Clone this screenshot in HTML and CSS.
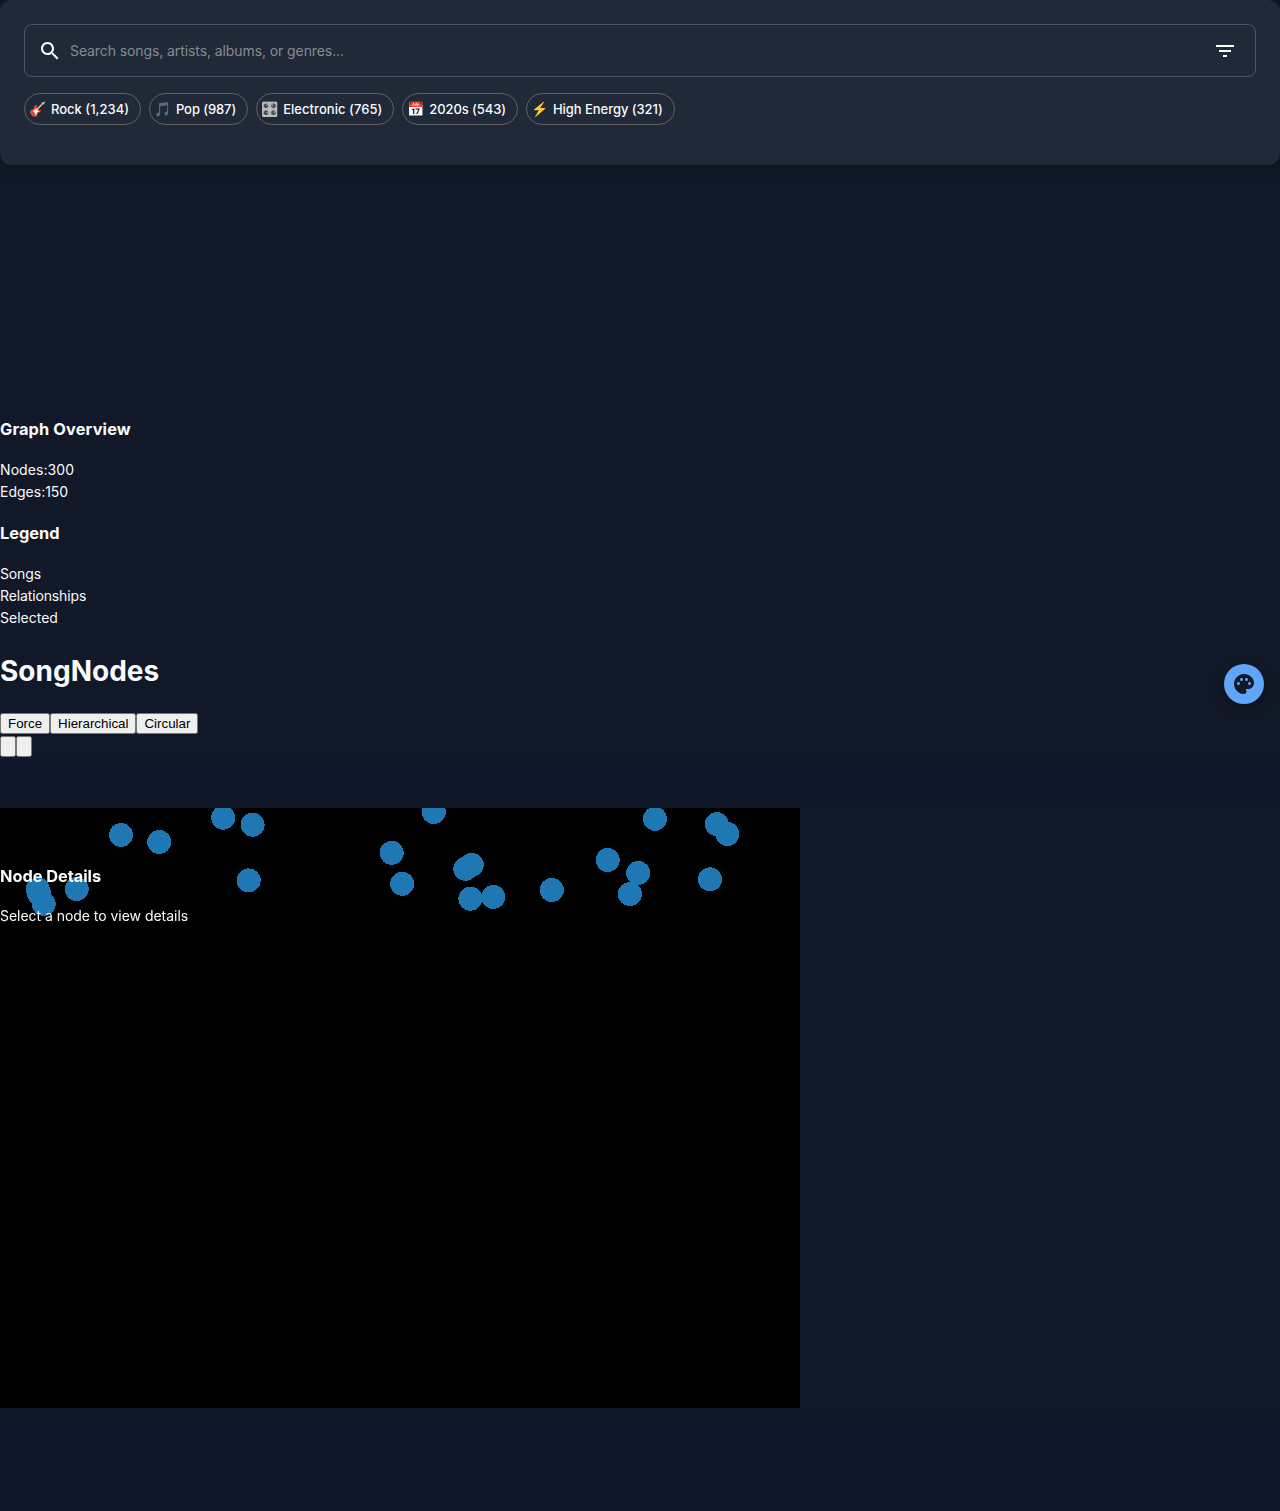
FILE: index.html
```html
<!DOCTYPE html>
<html lang="en">
<head>
<meta charset="utf-8">
<title>SongNodes</title>
<link rel="stylesheet" href="styles.css">
</head>
<body>
<header class="search-panel">
  <div class="search-box">
    <svg class="icon" viewBox="0 0 24 24"><path d="M15.5 14h-.79l-.28-.27C15.41 12.59 16 11.11 16 9.5 16 5.91 13.09 3 9.5 3S3 5.91 3 9.5 5.91 16 9.5 16c1.61 0 3.09-.59 4.23-1.57l.27.28v.79l5 4.99L20.49 19l-4.99-5zm-6 0C7.01 14 5 11.99 5 9.5S7.01 5 9.5 5 14 7.01 14 9.5 11.99 14 9.5 14z"/></svg>
    <input class="search-input" placeholder="Search songs, artists, albums, or genres...">
    <svg class="icon" viewBox="0 0 24 24"><path d="M10 18h4v-2h-4v2zM3 6v2h18V6H3zm3 7h12v-2H6v2z"/></svg>
  </div>
  <div class="chips">
    <span class="chip"><span class="emoji">🎸</span>Rock (1,234)</span>
    <span class="chip tight"><span class="emoji">🎵</span>Pop (987)</span>
    <span class="chip loose"><span class="emoji">🎛️</span>Electronic (765)</span>
    <span class="chip tight"><span class="emoji">📅</span>2020s (543)</span>
    <span class="chip snug"><span class="emoji">⚡</span>High Energy (321)</span>
  </div>
</header>
<main>
  <section class="overview">
    <h3 class="overview-title">Graph Overview</h3>
    <div class="stat">Nodes:300</div>
    <div>Edges:150</div>
    <h3>Legend</h3>
    <div class="legend-item">Songs</div>
    <div class="legend-item">Relationships</div>
    <div>Selected</div>
    <h1>SongNodes</h1>
    <div class="buttons"><button>Force</button><button>Hierarchical</button><button>Circular</button></div>
    <div class="buttons"><button class="blank" aria-label="Zoom in"></button><button class="blank" aria-label="Zoom out"></button></div>
  </section>
  <section class="graph">
    <svg class="canvas" width="800" height="600" viewBox="0 808 800 600">
      <circle cx="121" cy="835" r="12"/><circle cx="159.2" cy="842" r="12"/>
      <circle cx="223.2" cy="817.7" r="12"/><circle cx="252.6" cy="824.7" r="12"/>
      <circle cx="248.7" cy="880.4" r="12"/><circle cx="76.7" cy="889" r="12"/>
      <circle cx="37.8" cy="889.4" r="12"/><circle cx="39" cy="893.5" r="12"/><circle cx="43.7" cy="903.8" r="12"/>
      <circle cx="433.8" cy="812" r="12"/><circle cx="391.7" cy="852.8" r="12"/>
      <circle cx="402.2" cy="883.8" r="12"/><circle cx="465.3" cy="868.8" r="12"/>
      <circle cx="471.8" cy="864.9" r="12"/><circle cx="470.4" cy="898.7" r="12"/>
      <circle cx="493.3" cy="896.9" r="12"/><circle cx="551.8" cy="890" r="12"/>
      <circle cx="655" cy="818.8" r="12"/><circle cx="716.8" cy="824.2" r="12"/>
      <circle cx="727.3" cy="834" r="12"/><circle cx="607.7" cy="860" r="12"/>
      <circle cx="638.2" cy="873" r="12"/><circle cx="629.9" cy="894" r="12"/>
      <circle cx="710" cy="879.3" r="12"/>
    </svg>
    <aside class="details"><h3>Node Details</h3><p>Select a node to view details</p></aside>
  </section>
</main>
<button class="theme-button" aria-label="Theme"><svg class="icon" viewBox="0 0 24 24"><path d="M12 2C6.49 2 2 6.49 2 12s4.49 10 10 10c1.38 0 2.5-1.12 2.5-2.5 0-.61-.23-1.2-.64-1.67-.08-.1-.13-.21-.13-.33 0-.28.22-.5.5-.5H16c3.31 0 6-2.69 6-6 0-4.96-4.49-9-10-9zm5.5 11c-.83 0-1.5-.67-1.5-1.5s.67-1.5 1.5-1.5 1.5.67 1.5 1.5-.67 1.5-1.5 1.5zm-3-4c-.83 0-1.5-.67-1.5-1.5S13.67 6 14.5 6s1.5.67 1.5 1.5S15.33 9 14.5 9zM5 11.5c0-.83.67-1.5 1.5-1.5s1.5.67 1.5 1.5S7.33 13 6.5 13 5 12.33 5 11.5zm6-4c0 .83-.67 1.5-1.5 1.5S8 8.33 8 7.5 8.67 6 9.5 6s1.5.67 1.5 1.5z"/></svg></button>
</body>
</html>
```
FILE: styles.css
```css
* { box-sizing: border-box; }
body {
  margin: 0;
  min-height: 1511px;
  background: #0f172a;
  color: #f9fafb;
  font: 14px/1.6 Inter, sans-serif;
}
.icon { width: 24px; height: 24px; fill: currentColor; flex: none; }
.search-panel {
  position: relative;
  height: 165px;
  padding: 24px;
  border-radius: 12px;
  background: #1f2937;
  box-shadow: 0 4px 12px rgba(0, 0, 0, .15);
}
.search-box {
  display: flex;
  align-items: center;
  gap: 8px;
  height: 53px;
  padding: 0 18px 0 13px;
  border: 1px solid #4b5563;
  border-radius: 8px;
  color: #fff;
}
.search-input {
  flex: 1;
  padding: 0;
  border: 0;
  outline: 0;
  background: none;
  color: inherit;
  font: 14px/23px Inter, sans-serif;
  letter-spacing: -.093px;
}
.search-input::placeholder { color: #868b93; opacity: 1; }
.chips { display: flex; gap: 8px; margin-top: 16px; }
.chip {
  display: flex;
  align-items: center;
  height: 32px;
  padding: 0 11px 0 4px;
  border: 1px solid #616161;
  border-radius: 16px;
  font-size: 13px;
  font-weight: 500;
  white-space: nowrap;
}
.tight { letter-spacing: -.09px; }
.snug { letter-spacing: -.05px; }
.loose { letter-spacing: .05px; }
.emoji { width: 22px; font-size: 14px; letter-spacing: 0; }
.overview {
  height: 592px;
  padding-top: 251.4px;
  background: #111827;
}
h1, h3 { font-weight: 700; }
h3 { margin: 16.38px 0; font-size: 16.38px; }
.overview h3:first-child, .details h3 { margin-top: 0; }
.overview-title { letter-spacing: .13px; }
.stat { letter-spacing: .08px; }
.legend-item { letter-spacing: -.13px; }
h1 { margin: 18.76px 0 18.36px; font-size: 28px; }
.buttons { display: flex; height: 22.4px; align-items: flex-end; }
.buttons button {
  height: 21px;
  padding: 1px 6px;
  font: 13.333px "Liberation Sans", Arial, sans-serif;
}
.buttons .blank { width: 16px; }
.graph {
  display: grid;
  margin-top: 45px;
  padding: 6px 0;
  background: #111827;
}
.canvas, .details { grid-area: 1 / 1; }
.canvas { display: block; background: #000; fill: #1f77b4; shape-rendering: crispEdges; }
.details { z-index: 1; padding-top: 55px; will-change: transform; }
.details h3 { margin-bottom: 15.4px; letter-spacing: -.04px; }
.details p { margin: 0; letter-spacing: -.035px; }
.theme-button {
  position: fixed;
  top: 664px;
  right: 16px;
  display: grid;
  place-items: center;
  width: 40px;
  height: 40px;
  padding: 0;
  border: 0;
  border-radius: 50%;
  background: #60a5fa;
  color: #111827;
  box-shadow: 0 4px 12px rgba(0, 0, 0, .3);
}
```
